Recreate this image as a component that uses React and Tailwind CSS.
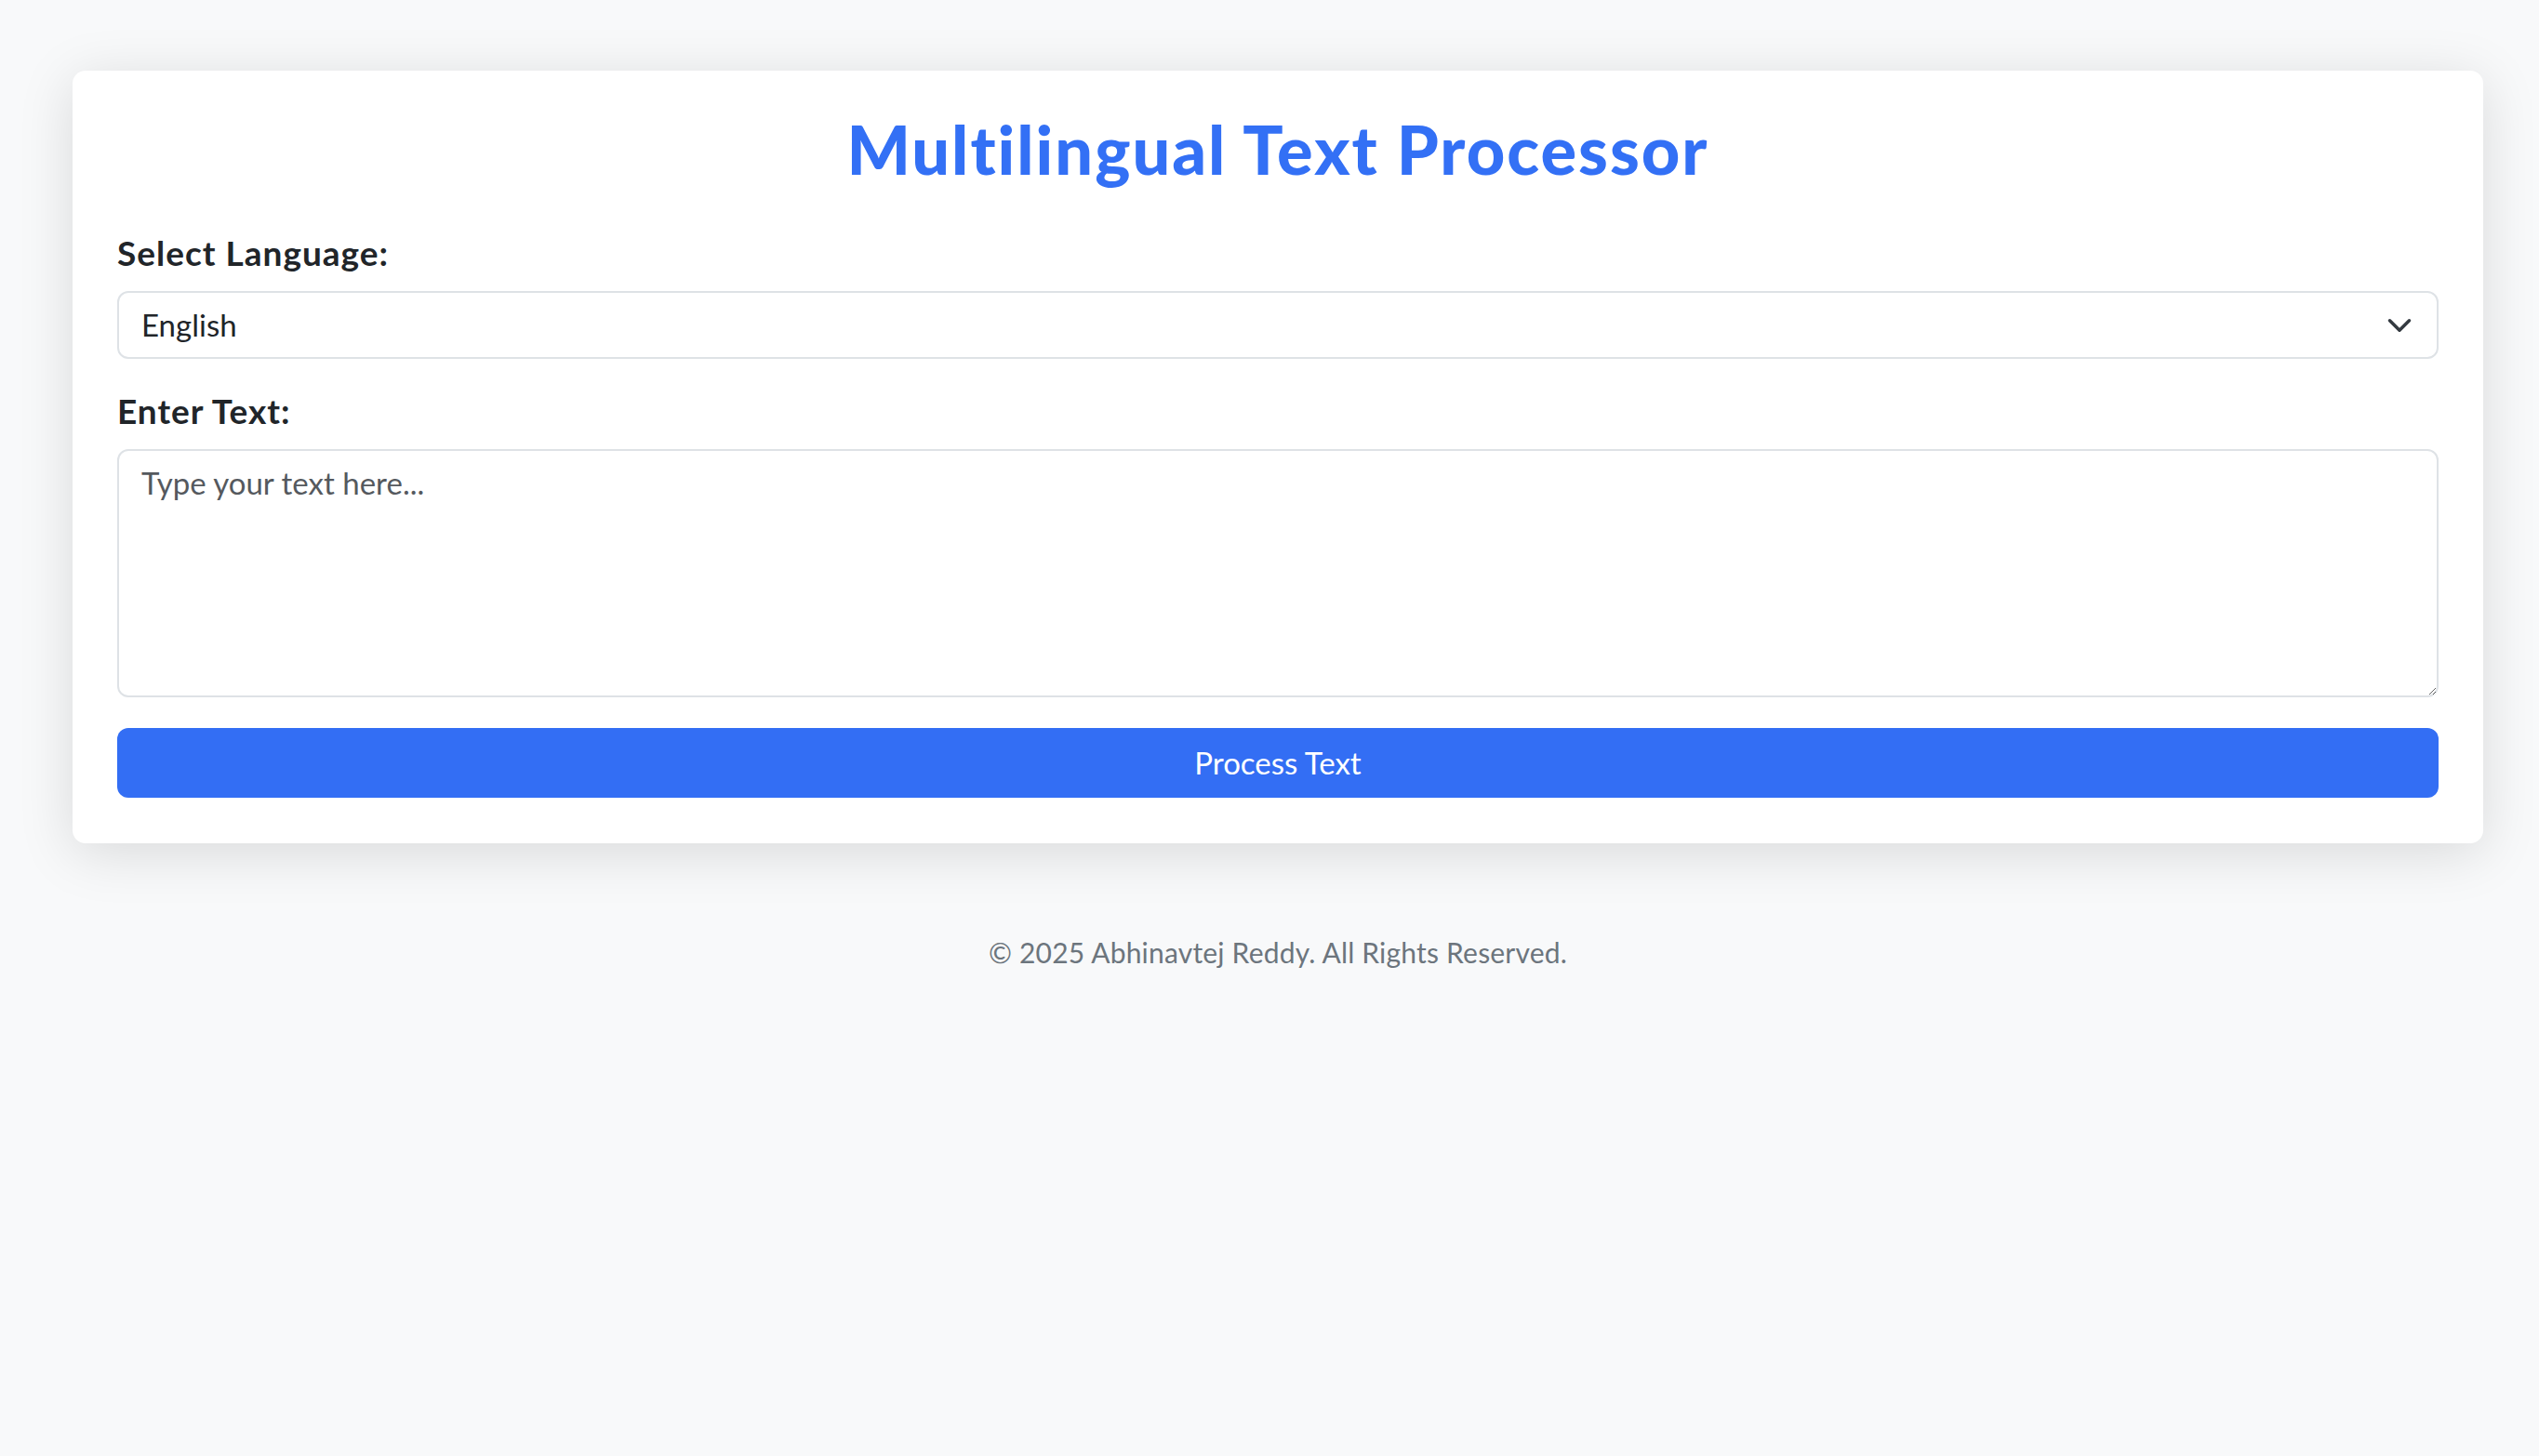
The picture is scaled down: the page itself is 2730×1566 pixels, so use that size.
import { useState } from 'react'

const App = () => {
  const [language, setLanguage] = useState('en')
  const [text, setText] = useState('')

  return (
    <div className="min-h-screen bg-[#f8f9fa] font-['Lato','Noto_Sans',sans-serif] text-[#212529]">
      <div className="pl-[78px] pr-[60px] pt-[76px]">
        {/* Card */}
        <div className="bg-white rounded-[14px] shadow-[0_10px_60px_rgba(0,0,0,0.13)] px-[48px] pt-[48px] pb-[49px]">
          <h1 className="text-center text-[72px] leading-[72px] tracking-[2px] font-black text-[#3370f5] mb-[52px]">
            Multilingual Text Processor
          </h1>

          <label htmlFor="language" className="block text-[37px] leading-[48px] tracking-[1px] font-bold mb-[17px]">
            Select Language:
          </label>
          <div className="relative mb-[32px]">
            <select
              id="language"
              value={language}
              onChange={(e) => setLanguage(e.target.value)}
              className="appearance-none w-full h-[73px] border-2 border-[#dee2e6] rounded-[12px] bg-white pl-[24px] pr-[80px] text-[33px] text-[#212529] outline-none"
            >
              <option value="en">English</option>
              <option value="hi">Hindi</option>
              <option value="te">Telugu</option>
              <option value="es">Spanish</option>
              <option value="fr">French</option>
            </select>
            <svg
              className="absolute right-[28px] top-1/2 -translate-y-1/2 w-[28px] h-[28px] pointer-events-none"
              viewBox="0 0 16 16"
              fill="none"
              stroke="#343a40"
              strokeWidth="2"
              strokeLinecap="round"
              strokeLinejoin="round"
            >
              <path d="m2 5 6 6 6-6" />
            </svg>
          </div>

          <label htmlFor="text" className="block text-[37px] leading-[48px] tracking-[1px] font-bold mb-[17px]">
            Enter Text:
          </label>
          <textarea
            id="text"
            value={text}
            onChange={(e) => setText(e.target.value)}
            placeholder="Type your text here..."
            className="block w-full h-[267px] border-2 border-[#dee2e6] rounded-[12px] px-[24px] py-[16px] text-[33px] leading-[36px] text-[#212529] placeholder:text-[#55595e] outline-none mb-[33px]"
          />

          <button className="w-full h-[75px] rounded-[12px] bg-[#336ef4] text-white text-[33px]">
            Process Text
          </button>
        </div>

        {/* Footer */}
        <footer className="text-center pt-[97px] pb-[40px]">
          <p className="text-[30px] leading-[40px] tracking-[0.2px] text-[#6c757d]">© 2025 Abhinavtej Reddy. All Rights Reserved.</p>
        </footer>
      </div>
    </div>
  )
}

export default App
